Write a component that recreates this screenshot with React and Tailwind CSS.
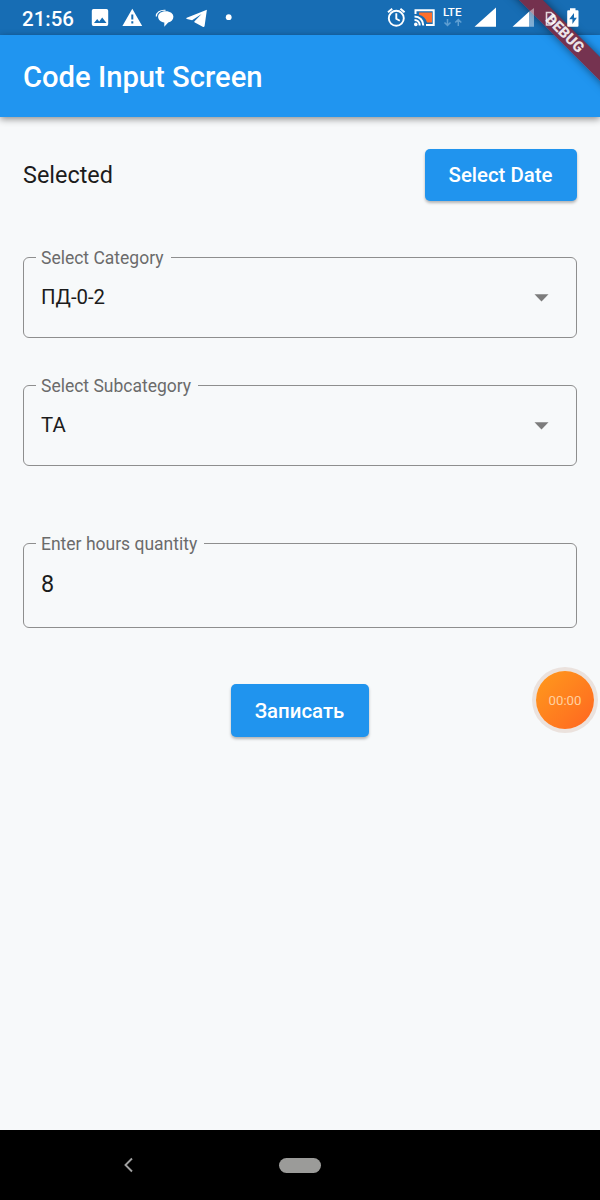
import React from "react";

function StatusBar() {
  return (
    <div className="h-[35px] w-full shrink-0 bg-[#176db4] text-white">
      <div className="flex h-full items-center pl-[22px]">
        <span className="w-[69px] pt-[3px] text-[20.5px] leading-none font-medium">21:56</span>
        <svg width="150" height="35" viewBox="91 0 150 35" fill="#fff">
          <path fillRule="evenodd" d="M93.500 9h13a1.700 1.700 0 0 1 1.700 1.700v13.600a1.700 1.700 0 0 1-1.700 1.700h-13a1.700 1.700 0 0 1-1.700-1.700V10.700A1.700 1.700 0 0 1 93.500 9ZM94 23h12.500l-4.300-5.500-3 3.900-2-2.500Z" />
          <path fillRule="evenodd" d="M132.300 8.700 142.200 26h-19.800ZM131.300 14.500v5h2v-5Zm0 6.800v2.200h2v-2.200Z" />
          <path d="M156.300 16.500c0-4 3.800-6.700 9.200-6.200" fill="none" stroke="#fff" strokeWidth="1.200" />
          <path d="M165.700 11.200c4.600 0 7.700 2.400 7.700 5.600 0 3-2.100 5-5.200 5.600l-3.900 4.400v-4.200c-3.700-.5-6.200-2.800-6.200-5.800 0-3.200 3-5.600 7.600-5.600Z" />
          <path d="M206.900 9.700 186.800 17.800c-.7.300-.6 1 .1 1.200l5.200 1.300 9.500-6.300-7.300 7.400.1.800 8.300 4.600c.9.500 1.700.1 1.900-.9Z" />
          <circle cx="228.700" cy="17.200" r="2.900" />
        </svg>
        <svg className="relative z-30 ml-auto" width="215" height="35" viewBox="385 0 215 35" fill="#fff">
          <g fill="none" stroke="#fff" strokeWidth="1.900">
            <circle cx="396.300" cy="18.300" r="7.500" />
            <path d="M396.300 13.300v5.500l3.500 2M388 12.300l4.200-3.600M404.600 12.300l-4.200-3.600" />
          </g>
          <path d="M419 12.500h13v10h-5c-1-4-4-6.800-8-7.700Z" fill="#ff6f2c" />
          <g fill="none" stroke="#fff" strokeWidth="2">
            <path d="M415.500 14v-3.800h18.200v14.800H426" />
            <path d="M414.500 16.500c5 0 8.800 3.800 8.800 9M414.500 20c3 0 5.200 2.300 5.200 5.500" />
          </g>
          <circle cx="415.800" cy="24.400" r="1.800" />
          <text x="443" y="15.700" fontSize="11.200" fontFamily="Roboto, sans-serif" fontWeight="500" textLength="18.500" lengthAdjust="spacingAndGlyphs">LTE</text>
          <path d="M447.500 19v6.500m-3-3 3 3 3-3M458.300 26v-6.500m-3 3 3-3 3 3" fill="none" stroke="#5f9fd2" strokeWidth="1.500" />
          <path d="M496 7.500v19.300h-21.500ZM529 11.800v15h-16.500Z" />
          <path d="M529 11.800 534 8v18.800h-5Z" opacity=".45" />
          <path d="M546.500 25V12.500h4.500l3.500 3-3.500 3.500 3.500 3-3.500 3Z" fill="none" stroke="#fff" strokeOpacity=".8" strokeWidth="1.600" />
          <path fillRule="evenodd" d="M570 8.200h5.500v2h2a1 1 0 0 1 1 1v14.500a1 1 0 0 1-1 1h-9.300a1 1 0 0 1-1-1V11.200a1 1 0 0 1 1-1h1.800ZM574 13l-4.800 6.200h3.200V24l4.500-6.200H574Z" />
        </svg>
      </div>
    </div>
  );
}

function DebugRibbon() {
  return (
    <div className="pointer-events-none absolute top-0 right-0 z-20 h-[117px] w-[117px] overflow-hidden">
      <div className="absolute top-[25.500px] left-[-11px] flex h-[16.500px] w-[187px] rotate-45 items-center justify-center bg-[#78304a]/97 text-[14.800px] leading-none font-black text-[#ece4e8] shadow-[0_0_8px_rgba(0,0,0,0.5)]">
        <span className="-ml-[2px]">DEBUG</span>
      </div>
    </div>
  );
}

function Field({ label, value, dropdown, className, valueClass }) {
  return (
    <fieldset className={`w-full min-w-0 rounded-[6px] border border-[#8e8e8e] ${className}`}>
      <legend className="ml-[12px] h-[22px] pr-[7px] pl-[5px] text-[17.5px] leading-[24px] whitespace-nowrap text-[#6b6b6b]">
        {label}
      </legend>
      <div className="flex items-center justify-between pr-[27px] pl-[17px]">
        <span className={`leading-[28px] text-[#1c1c1c] ${valueClass}`}>{value}</span>
        {dropdown && (
          <svg width="15" height="8" viewBox="0 0 15 8" className="mt-[16px]">
            <path d="M.5.200h14L7.500 7.400Z" fill="#7c7c7c" />
          </svg>
        )}
      </div>
    </fieldset>
  );
}

function RaisedButton({ children, className }) {
  return (
    <button
      className={`rounded-[5px] bg-[#2094ee] pr-[1px] text-[20.4px] font-medium whitespace-nowrap text-white shadow-[0_2px_3px_rgba(0,0,0,0.28)] ${className}`}
    >
      {children}
    </button>
  );
}

export default function App() {
  return (
    <div className="relative flex h-[1200px] w-[600px] flex-col overflow-hidden bg-[#f7f9fa] font-[Roboto,sans-serif]">
      <StatusBar />
      <header className="flex h-[82px] shrink-0 items-center bg-[#2095f0] pl-[23px] shadow-[0_2px_7px_rgba(0,0,0,0.45)]">
        <h1 className="pt-[3px] text-[29.2px] font-medium text-white">Code Input Screen</h1>
      </header>
      <DebugRibbon />
      <main className="flex flex-1 flex-col items-center pt-[32px] pr-[23px] pl-[23px]">
        <div className="flex w-full items-center justify-between">
          <span className="pt-[2px] text-[23.4px] text-[#1c1c1c]">Selected</span>
          <RaisedButton className="h-[52px] w-[152px]">Select Date</RaisedButton>
        </div>
        <Field className="mt-[45px] h-[92px]" label="Select Category" value="ПД-0-2" valueClass="mt-[15px] text-[20.4px]" dropdown />
        <Field className="mt-[36px] h-[92px]" label="Select Subcategory" value="ТА" valueClass="mt-[15px] text-[20.4px]" dropdown />
        <Field className="mt-[66px] h-[96px]" label="Enter hours quantity" value="8" valueClass="mt-[16px] text-[23.4px]" />
        <RaisedButton className="mt-[56px] h-[53px] w-[138px] pt-[2px]">Записать</RaisedButton>
      </main>
      <div className="absolute top-[671px] left-[536px] flex h-[58px] w-[58px] items-center justify-center rounded-full bg-linear-to-br from-[#ff9a1c] to-[#ff6420] pt-[1px] text-[13.200px] text-[#ffd0a0] shadow-[0_0_0_4px_#ebe2dd]">
        00:00
      </div>
      <nav className="flex h-[70px] shrink-0 items-center bg-black">
        <svg className="ml-[123px]" width="12" height="16" viewBox="0 0 12 16">
          <path d="M9 1.500 2.500 8 9 14.500" fill="none" stroke="#a0a0a0" strokeWidth="1.900" />
        </svg>
        <div className="ml-[144px] h-[15px] w-[42px] rounded-full bg-[#9b9b99]" />
      </nav>
    </div>
  );
}
